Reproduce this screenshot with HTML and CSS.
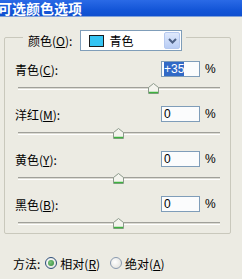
FILE: index.html
```html
<!DOCTYPE html>
<html lang="zh-CN">
<head>
  <meta charset="UTF-8" />
  <title>可选颜色选项</title>
  <link rel="stylesheet" href="styles.css">
</head>
<body>

<div class="titlebar">可选颜色选项</div>

<div class="client">
  <div class="group">
    <div class="legend">
      <span class="lbl">颜色(<u>O</u>):</span>
      <div class="select">
        <span class="swatch"></span>
        <span class="select-text">青色</span>
        <span class="select-btn">
          <svg width="9" height="6" viewBox="0 0 9 6"><path d="M1 1 L4.5 4.5 L8 1" fill="none" stroke="#4d6185" stroke-width="2"/></svg>
        </span>
      </div>
    </div>

    <div class="row">
      <div class="row-head">
        <span class="lbl">青色(<u>C</u>):</span>
        <div class="input"><span class="sel">+35</span></div>
        <span class="pct">%</span>
      </div>
      <div class="slider">
        <div class="track"></div>
        <svg class="thumb" style="left: 130px" width="11" height="11" viewBox="0 0 11 11"><path d="M5.5 0.5 L10.5 4.5 L10.5 10.5 L0.5 10.5 L0.5 4.5 Z" fill="#f4f4ee" stroke="#8c9a8c"/><path d="M1 9.5 H10" stroke="#3fb23f" stroke-width="1.5"/></svg>
      </div>
    </div>

    <div class="row">
      <div class="row-head">
        <span class="lbl">洋红(<u>M</u>):</span>
        <div class="input">0</div>
        <span class="pct">%</span>
      </div>
      <div class="slider">
        <div class="track"></div>
        <svg class="thumb" style="left: 95px" width="11" height="11" viewBox="0 0 11 11"><path d="M5.5 0.5 L10.5 4.5 L10.5 10.5 L0.5 10.5 L0.5 4.5 Z" fill="#f4f4ee" stroke="#8c9a8c"/><path d="M1 9.5 H10" stroke="#3fb23f" stroke-width="1.5"/></svg>
      </div>
    </div>

    <div class="row">
      <div class="row-head">
        <span class="lbl">黄色(<u>Y</u>):</span>
        <div class="input">0</div>
        <span class="pct">%</span>
      </div>
      <div class="slider">
        <div class="track"></div>
        <svg class="thumb" style="left: 95px" width="11" height="11" viewBox="0 0 11 11"><path d="M5.5 0.5 L10.5 4.5 L10.5 10.5 L0.5 10.5 L0.5 4.5 Z" fill="#f4f4ee" stroke="#8c9a8c"/><path d="M1 9.5 H10" stroke="#3fb23f" stroke-width="1.5"/></svg>
      </div>
    </div>

    <div class="row">
      <div class="row-head">
        <span class="lbl">黑色(<u>B</u>):</span>
        <div class="input">0</div>
        <span class="pct">%</span>
      </div>
      <div class="slider">
        <div class="track"></div>
        <svg class="thumb" style="left: 95px" width="11" height="11" viewBox="0 0 11 11"><path d="M5.5 0.5 L10.5 4.5 L10.5 10.5 L0.5 10.5 L0.5 4.5 Z" fill="#f4f4ee" stroke="#8c9a8c"/><path d="M1 9.5 H10" stroke="#3fb23f" stroke-width="1.5"/></svg>
      </div>
    </div>
  </div>

  <div class="method">
    <span class="lbl">方法:</span>
    <span class="radio checked"></span>
    <span class="lbl">相对(<u>R</u>)</span>
    <span class="radio second"></span>
    <span class="lbl">绝对(<u>A</u>)</span>
  </div>
</div>

</body>
</html>
```

FILE: styles.css
```css
* {
    margin: 0;
    padding: 0;
    box-sizing: border-box;
}

body {
    background-color: #ecebe3;
    font-family: "Noto Sans CJK SC", "Noto Sans", sans-serif;
    font-size: 12px;
    color: #000;
    overflow: hidden;
}

.titlebar {
    height: 17px;
    line-height: 16px;
    background: linear-gradient(to bottom, #2a6ae6, #1456d8 60%, #0f4fcf);
    border-bottom: 1px solid #7fa0d8;
    color: #fff;
    font-weight: bold;
    font-size: 14px;
    text-indent: -2px;
    white-space: nowrap;
}

.client {
    padding: 20px 11px 0 4px;
}

.group {
    border: 1px solid #c9c8bc;
    border-radius: 2px;
    padding: 0 14px 10px 10px;
    height: 197px;
}

.legend {
    display: flex;
    align-items: center;
    width: max-content;
    margin: -8px 0 0 8px;
    padding: 0 4px 0 5px;
    background-color: #ecebe3;
    height: 21px;
}

.lbl {
    white-space: nowrap;
}

.legend .lbl {
    margin-right: 8px;
}

.select {
    display: flex;
    align-items: center;
    width: 102px;
    height: 21px;
    border: 1px solid #7f9db9;
    background-color: #fff;
    padding: 2px 1px 2px 8px;
}

.swatch {
    width: 15px;
    height: 12px;
    background-color: #35c4f2;
    border: 1px solid #1b1b1b;
}

.select-text {
    margin-left: 5px;
    flex: 1;
}

.select-btn {
    width: 16px;
    height: 17px;
    display: flex;
    align-items: center;
    justify-content: center;
    background: linear-gradient(to bottom, #dfe9fc, #b9cdf5);
    border: 1px solid #b6c9ef;
    border-radius: 2px;
}

.row {
    margin-top: 11px;
}

.row:nth-child(2) {
    margin-top: 10px;
}

.row-head {
    display: flex;
    align-items: center;
    height: 16px;
}

.row-head .lbl {
    flex: 1;
    line-height: 16px;
    margin-top: 2px;
}

.input {
    width: 39px;
    height: 16px;
    border: 1px solid #7f9db9;
    background-color: #fbfcfd;
    padding-left: 2px;
    line-height: 14px;
    font-family: "Liberation Sans", Arial, sans-serif;
    font-size: 12px;
}

.sel {
    background-color: #3169c6;
    color: #fff;
}

.pct {
    margin-left: 5px;
    width: 11px;
    font-family: "Liberation Sans", Arial, sans-serif;
}

.slider {
    position: relative;
    height: 12px;
    margin: 6px 0 0 3px;
    width: 202px;
}

.track {
    position: absolute;
    left: 0;
    right: 0;
    top: 4px;
    height: 3px;
    border-top: 1px solid #a0a09a;
    border-bottom: 1px solid #fff;
    background-color: #dcdbd3;
}

.thumb {
    position: absolute;
    top: 0;
}

.method {
    display: flex;
    align-items: center;
    height: 16px;
    margin-top: 21px;
    padding-left: 9px;
}

.method .lbl:first-child {
    margin-right: 5px;
}

.radio {
    width: 12px;
    height: 12px;
    border: 1px solid #2c4e7a;
    border-radius: 50%;
    background: radial-gradient(circle at 40% 40%, #fff, #dcdcd6);
    margin-right: 3px;
    position: relative;
}

.radio.checked::after {
    content: "";
    position: absolute;
    left: 2px;
    top: 2px;
    width: 6px;
    height: 6px;
    border-radius: 50%;
    background: radial-gradient(circle at 40% 40%, #7ec47e, #2f8a3a);
}

.radio.second {
    margin-left: 10px;
    border-color: #8a9ab0;
}
```
